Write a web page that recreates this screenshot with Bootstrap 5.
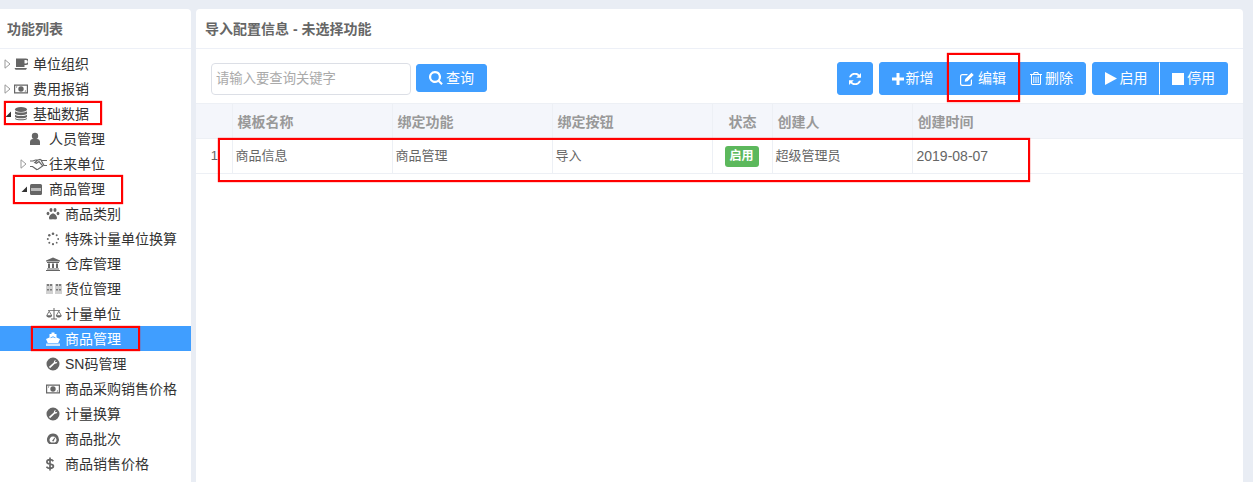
<!DOCTYPE html>
<html lang="zh"><head><meta charset="utf-8"><title>导入配置</title>
<link rel="stylesheet" href="https://cdn.jsdelivr.net/npm/bootstrap@5.3.0/dist/css/bootstrap.min.css">
<script src="https://cdn.jsdelivr.net/npm/bootstrap@5.3.0/dist/js/bootstrap.bundle.min.js"></script>
<style>
html,body{height:482px;overflow:hidden}
body{background:#e9edf4;font:14px/20px "Liberation Sans","Noto Sans CJK SC",sans-serif;color:#333;position:relative}
.shell{height:482px;padding-top:9px;gap:5px}
.side-pane{width:191px;flex:none;border-radius:0 4px 0 0;overflow:hidden}
.main-pane{width:1047px;flex:none;border-radius:4px 4px 0 0;overflow:hidden}
.pane-head{height:40px;line-height:40px;border-bottom:1px solid #edf0f7;font-weight:700;color:#666}
.side-pane .pane-head{padding-left:7px}.main-pane .pane-head{padding-left:9px}
.tree-list{padding-top:2px}
.tree-row{height:25px;color:#333;padding-left:3px}
.lv1{padding-left:19px}.lv2{padding-left:35px}
.tree-row.picked{background:#409eff;color:#fff}
.caret-box{width:11px;flex:none;height:10px}
.icon-box{width:14px;height:14px;flex:none;margin-right:5px;fill:#666;color:#666}
.icon-box.wide-a{width:17px;margin-right:2px}
.icon-box.wide-b{width:16px;margin-right:3px}
.picked .icon-box{fill:#fff;color:#fff}
.tool-row{height:54px;padding:5px 15px 0}
.search-box{width:200px;height:32px;border:1px solid #dcdfe6;border-radius:4px;font-size:13.33px;padding:0 4px;color:#666;outline:0}
.search-box::placeholder{color:#aaa}
.act-btn{--bs-btn-bg:#409eff;--bs-btn-border-color:#409eff;--bs-btn-color:#fff;--bs-btn-padding-y:0;--bs-btn-padding-x:0;--bs-btn-font-size:14px;--bs-btn-border-radius:3px;--bs-btn-hover-bg:#409eff;--bs-btn-hover-border-color:#409eff;height:33px;line-height:31px;white-space:nowrap;display:inline-flex;align-items:center;justify-content:center;gap:3px;flex:none!important}
.act-btn svg{fill:#fff;flex:none}
.find-btn{height:28px;line-height:26px;width:71px;margin-left:5px;margin-top:-1px}
.w-ref{width:36px}.w-add{width:70px;padding-right:3px;gap:2px}.w-edit{width:73px;padding-right:3px;gap:4px}.w-del{width:66px;padding-right:3px}.w-on{width:68px}.w-off{width:69px}
.split-left{margin-left:6px}
.off-btn{border-left-color:#fff!important}
.cfg-table{width:100%;table-layout:fixed;margin:0;font-size:13px;--bs-table-color:#666;--bs-table-border-color:#edf0f5}
.cfg-table th{height:35px;padding:2px 4px 0 5px;background:#f4f6fb;font-size:14px;line-height:20px;color:#999;font-weight:700;border-top:1px solid #edf0f5;border-right:1px solid #edf0f5;vertical-align:middle;box-shadow:none}
.cfg-table td{height:35px;padding:0 2px 0 3px;border-right:1px solid #edf0f5;vertical-align:middle;color:#666}
.cfg-table th:last-child,.cfg-table td:last-child{border-right:0}
.cfg-table td.date-cell{font-size:14px;padding-left:4px}
.on-tag{display:inline-block;width:34px;height:21px;line-height:21px;background:#5cb85c;color:#fff;font-size:12px;font-weight:700;border-radius:3px;text-align:center;vertical-align:middle;margin-right:2px}
.red-mark{position:absolute;border:2px solid #f00;pointer-events:none;box-shadow:0 0 1px #f00}
.m1{left:4px;top:101px;width:98px;height:24px}
.m2{left:13px;top:175px;width:110px;height:29px}
.m3{left:31px;top:326px;width:109px;height:25px}
.m4{left:947px;top:53px;width:73px;height:49px}
.m5{left:218px;top:138px;width:812px;height:44px}
</style></head><body>
<svg width="0" height="0" class="position-absolute">
<defs>
<symbol id="tri-o" viewBox="0 0 10 10"><path d="M1.500 .8 6.500 5l-5 4.200z" fill="#fff" stroke="#999" stroke-width="1"/></symbol>
<symbol id="tri-f" viewBox="0 0 10 10"><path d="M7.500 2.500v5.500H2z" fill="#333"/></symbol>
<symbol id="coffee" viewBox="0 0 14 14"><path d="M2 1.500h10a2.300 2.300 0 0 1 0 6.500h-1.500V10H2zm8.500 1.400V6.500H12a1.800 1.800 0 0 0 0-3.600zM.5 11h12.500l-1 1.800H1.500z"/></symbol>
<symbol id="money" viewBox="0 0 14 14"><path fill-rule="evenodd" d="M0 2.500h14v9H0zm1.200 1.200v6.600h11.600V3.700zM7 4.300a2.700 2.700 0 1 1 0 5.400 2.700 2.700 0 0 1 0-5.400zM2 4.500h1.500L2 6zm10 5H10.500L12 8z"/></symbol>
<symbol id="db" viewBox="0 0 14 14"><ellipse cx="7" cy="2.500" rx="6" ry="2.500"/><path d="M1 4.200c1 1.800 11 1.800 12 0v2.400c-1 2.200-11 2.200-12 0zm0 3.500c1 1.800 11 1.800 12 0v2c-1 2.200-11 2.200-12 0zm0 3.300c1 1.800 11 1.800 12 0v.7c-1 2.200-11 2.200-12 0z"/></symbol>
<symbol id="user" viewBox="0 0 14 14"><circle cx="5" cy="4" r="3.200"/><path d="M0 13V10c0-2 1.400-3 2.800-3h4.400C8.600 7 10 8 10 10v3z"/></symbol>
<symbol id="hands" viewBox="0 0 17 14"><path fill="none" stroke="currentColor" stroke-width="1.200" d="M0 4h3l2.500-1H8l2-.5 2 1h5M0 9.500h2.500l4.300 3 1.200-.2 4.700-3.400-3.700-4.400-2.500 1.800-1.700-.8L7.500 3.300M11.200 3.500 14 8.500h3"/></symbol>
<symbol id="card" viewBox="0 0 14 14"><rect x="0" y="2" width="12" height="11" rx="1.500"/><rect x="1" y="6" width="10" height="3" fill="#bbb"/></symbol>
<symbol id="paw" viewBox="0 0 14 14"><ellipse cx="5" cy="3" rx="1.500" ry="2"/><ellipse cx="9" cy="3" rx="1.500" ry="2"/><ellipse cx="2" cy="6.500" rx="1.400" ry="1.800"/><ellipse cx="12" cy="6.500" rx="1.400" ry="1.800"/><path d="M7 6.500c2 0 4 2.700 4 4.500 0 2-2.500 1.300-4 1.300S3 13 3 11c0-1.800 2-4.500 4-4.500z"/></symbol>
<symbol id="spin" viewBox="0 0 14 14"><circle cx="7" cy="1.800" r="1.300"/><circle cx="10.700" cy="3.300" r="1"/><circle cx="12.200" cy="7" r=".9"/><circle cx="10.700" cy="10.700" r=".9"/><circle cx="7" cy="12.200" r="1.100"/><circle cx="3.300" cy="10.700" r="1"/><circle cx="1.800" cy="7" r="1"/><circle cx="3.300" cy="3.300" r="1.200"/></symbol>
<symbol id="bank" viewBox="0 0 14 14"><path d="M7 .5 14 3.500V4.500H0V3.500zM1 5h12v1H1zM2 6.500h2v4.500H2zM6 6.500h2v4.500H6zM10 6.500h2v4.500h-2zM1 11.500h12v1H1zM0 13h14v1H0z"/></symbol>
<symbol id="dots" viewBox="0 0 16 14"><path opacity=".3" d="M0 2h7v10H0zm9 0h7v10H9z"/><path d="M1 2h2v2H1zm3 0h2v2H4zm6 0h2v2h-2zm3 0h2v2h-2zM1 7h2v1.500H1zm3 0h2v1.500H4zm6 0h2v1.500h-2zm3 0h2v1.500h-2z" opacity=".8"/></symbol>
<symbol id="scale" viewBox="0 0 16 14"><path d="M7.500 1h1v10.500H11v1H5v-1h2.500zM2 3h12v.8H2z"/><path fill-rule="evenodd" d="M3.200 3.500.3 8.500c.2 1.500 1.700 2 2.900 2s2.700-.5 2.900-2zM3.200 5 1.300 8.300H5.100zM12.800 3.500 9.900 8.500c.2 1.500 1.700 2 2.900 2s2.700-.5 2.900-2zM12.800 5l-1.900 3.300h3.800z"/></symbol>
<symbol id="ship" viewBox="0 0 14 14"><path d="M5.500 .5h3V2h2v3.500L14 7l-1.800 4H1.800L0 7l3.500-1.500V2h2zM7 4.300 4.500 5.400v.8L7 5.300l2.500.9v-.8z"/><path d="M0 11.500h14V14H0z" opacity=".75"/></symbol>
<symbol id="wrench" viewBox="0 0 14 14"><path fill-rule="evenodd" d="M7 .5a6.500 6.500 0 1 1 0 13 6.500 6.500 0 0 1 0-13zm3 2.400L8.200 3.800 7.800 5.400 3 9.800l1 1.400 4.800-4.400 1.600-.2 1.100-1.900-1.700.6-.9-.9z"/></symbol>
<symbol id="gauge" viewBox="0 0 14 14"><path fill-rule="evenodd" d="M7 1.500a6 6 0 0 1 5 9.300L10.800 12H3.200L2 10.800A6 6 0 0 1 7 1.500zm0 3a3.500 3.500 0 0 0-3.300 4.700L5 10.500h4l1.300-1.300A3.500 3.500 0 0 0 7 4.500z"/><path d="M6 9 8.500 5.500l.7.4L7.500 9.500z"/></symbol>
<symbol id="usd" viewBox="0 0 14 14"><path fill="none" stroke="currentColor" stroke-width="1.700" d="M7.300 4.200C6.600 3 5.500 2.700 4 2.700c-1.900 0-3.100.9-3.100 2.200 0 3.100 6.500 1.300 6.500 4.200 0 1.400-1.400 2.300-3.400 2.300-1.600 0-2.900-.5-3.600-1.700M4 .5v13"/></symbol>
</defs></svg>

<div class="shell d-flex">
<aside class="side-pane bg-white">
<div class="pane-head">功能列表</div>
<div class="tree-list">
<div class="tree-row d-flex align-items-center"><svg class="caret-box"><use href="#tri-o"/></svg><svg class="icon-box"><use href="#coffee"/></svg><span>单位组织</span></div>
<div class="tree-row d-flex align-items-center"><svg class="caret-box"><use href="#tri-o"/></svg><svg class="icon-box"><use href="#money"/></svg><span>费用报销</span></div>
<div class="tree-row d-flex align-items-center"><svg class="caret-box"><use href="#tri-f"/></svg><svg class="icon-box"><use href="#db"/></svg><span>基础数据</span></div>
<div class="tree-row lv1 d-flex align-items-center"><span class="caret-box"></span><svg class="icon-box"><use href="#user"/></svg><span>人员管理</span></div>
<div class="tree-row lv1 d-flex align-items-center"><svg class="caret-box"><use href="#tri-o"/></svg><svg class="icon-box wide-a"><use href="#hands"/></svg><span>往来单位</span></div>
<div class="tree-row lv1 d-flex align-items-center"><svg class="caret-box"><use href="#tri-f"/></svg><svg class="icon-box"><use href="#card"/></svg><span>商品管理</span></div>
<div class="tree-row lv2 d-flex align-items-center"><span class="caret-box"></span><svg class="icon-box"><use href="#paw"/></svg><span>商品类别</span></div>
<div class="tree-row lv2 d-flex align-items-center"><span class="caret-box"></span><svg class="icon-box"><use href="#spin"/></svg><span>特殊计量单位换算</span></div>
<div class="tree-row lv2 d-flex align-items-center"><span class="caret-box"></span><svg class="icon-box"><use href="#bank"/></svg><span>仓库管理</span></div>
<div class="tree-row lv2 d-flex align-items-center"><span class="caret-box"></span><svg class="icon-box wide-b"><use href="#dots"/></svg><span>货位管理</span></div>
<div class="tree-row lv2 d-flex align-items-center"><span class="caret-box"></span><svg class="icon-box wide-b"><use href="#scale"/></svg><span>计量单位</span></div>
<div class="tree-row lv2 picked d-flex align-items-center"><span class="caret-box"></span><svg class="icon-box"><use href="#ship"/></svg><span>商品管理</span></div>
<div class="tree-row lv2 d-flex align-items-center"><span class="caret-box"></span><svg class="icon-box"><use href="#wrench"/></svg><span>SN码管理</span></div>
<div class="tree-row lv2 d-flex align-items-center"><span class="caret-box"></span><svg class="icon-box"><use href="#money"/></svg><span>商品采购销售价格</span></div>
<div class="tree-row lv2 d-flex align-items-center"><span class="caret-box"></span><svg class="icon-box"><use href="#wrench"/></svg><span>计量换算</span></div>
<div class="tree-row lv2 d-flex align-items-center"><span class="caret-box"></span><svg class="icon-box"><use href="#gauge"/></svg><span>商品批次</span></div>
<div class="tree-row lv2 d-flex align-items-center"><span class="caret-box"></span><svg class="icon-box"><use href="#usd"/></svg><span>商品销售价格</span></div>
</div>
</aside>
<main class="main-pane bg-white">
<div class="pane-head">导入配置信息 - 未选择功能</div>
<div class="tool-row d-flex align-items-center">
<input class="search-box" type="text" placeholder="请输入要查询关键字">
<button class="btn act-btn find-btn" type="button"><svg width="14" height="14" viewBox="0 0 14 14"><path fill-rule="evenodd" d="M6 0a6 6 0 0 1 4.800 9.600l3 3-1.500 1.400-3-3A6 6 0 1 1 6 0zm0 2.200a3.800 3.800 0 1 0 0 7.600 3.800 3.800 0 0 0 0-7.600z"/></svg>查询</button>
<div class="ms-auto d-flex">
<button class="btn act-btn w-ref" type="button"><svg width="14" height="14" viewBox="0 0 14 14"><path d="M13 1v4.800H8.200l1.800-1.800A4.200 4.200 0 0 0 3 5.300H1.100A6.100 6.100 0 0 1 11.300 2.700zM1 13V8.200h4.800L4 10a4.200 4.200 0 0 0 7-1.300h1.900A6.100 6.100 0 0 1 2.700 11.300z"/></svg></button>
<div class="btn-group split-left">
<button class="btn act-btn w-add" type="button"><svg width="12" height="12" viewBox="0 0 12 12"><path d="M4.500 0h3v4.500H12v3H7.500V12h-3V7.500H0v-3h4.500z"/></svg>新增</button>
<button class="btn act-btn w-edit" type="button"><svg width="14" height="14" viewBox="0 0 14 14"><path fill-rule="evenodd" d="M2.500 2H8L6.800 3.200H2.500A1.300 1.300 0 0 0 1.200 4.500v7a1.300 1.300 0 0 0 1.300 1.300h7a1.300 1.300 0 0 0 1.300-1.300V8.300L12 7.100v4.400A2.500 2.500 0 0 1 9.500 14h-7A2.500 2.500 0 0 1 0 11.500v-7A2.500 2.500 0 0 1 2.500 2zM11.500.8 13.700 3 7.500 9.300 4.700 9.800l.5-2.800z"/></svg>编辑</button>
<button class="btn act-btn w-del" type="button"><svg width="12" height="13" viewBox="0 0 12 13"><path fill-rule="evenodd" d="M4 0h4l1 2h3v1h-1v8.500A1.500 1.500 0 0 1 9.500 13h-7A1.500 1.500 0 0 1 1 11.500V3H0V2h3zm.7 1L4.300 2h3.400l-.4-1zM2 3v8.500c0 .3.200.5.500.5h7c.3 0 .5-.2.500-.5V3zm1.300 1.500h1V11h-1zm2.200 0h1V11h-1zm2.200 0h1V11h-1z"/></svg>删除</button>
</div>
<div class="btn-group split-left">
<button class="btn act-btn w-on" type="button"><svg width="12" height="13" viewBox="0 0 12 13"><path d="M0 0l12 6.500L0 13z"/></svg>启用</button>
<button class="btn act-btn w-off off-btn" type="button"><svg width="12" height="12" viewBox="0 0 12 12"><path d="M0 0h12v12H0z"/></svg>停用</button>
</div>
</div>
</div>
<table class="table cfg-table">
<colgroup><col style="width:36px"><col style="width:160px"><col style="width:160px"><col style="width:160px"><col style="width:60px"><col style="width:140px"><col></colgroup>
<thead><tr><th></th><th>模板名称</th><th>绑定功能</th><th>绑定按钮</th><th class="text-center">状态</th><th>创建人</th><th>创建时间</th></tr></thead>
<tbody><tr><td class="text-center">1</td><td>商品信息</td><td>商品管理</td><td>导入</td><td class="text-center"><span class="on-tag">启用</span></td><td>超级管理员</td><td class="date-cell">2019-08-07</td></tr></tbody>
</table>
</main>
</div>
<div class="red-mark m1"></div><div class="red-mark m2"></div><div class="red-mark m3"></div><div class="red-mark m4"></div><div class="red-mark m5"></div>
</body></html>
